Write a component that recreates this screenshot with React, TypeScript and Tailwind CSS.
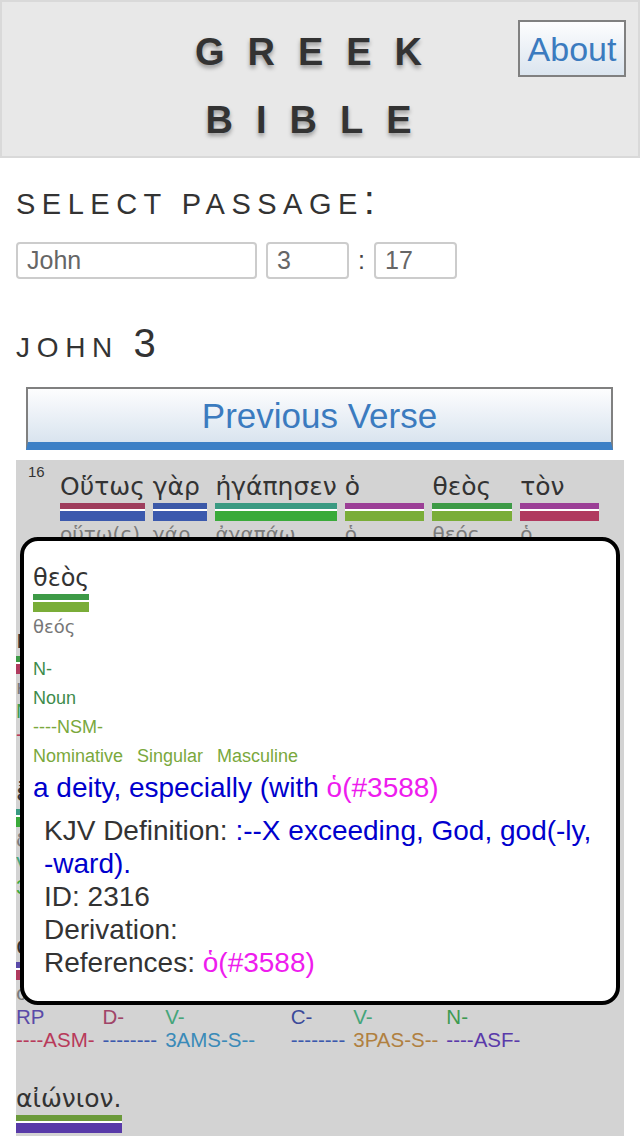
const greek = "font-['DejaVu_Sans',sans-serif]";

const pos: Record<string, { bar: string; text: string }> = {
  D: { bar: 'bg-[#9e3d5c]', text: 'text-[#a04468]' },
  C: { bar: 'bg-[#3b58a8]', text: 'text-[#3b4a9a]' },
  V: { bar: 'bg-[#3a9a82]', text: 'text-[#45a57a]' },
  RA: { bar: 'bg-[#9b3f96]', text: 'text-[#9b3f96]' },
  N: { bar: 'bg-[#3d9a46]', text: 'text-[#3d9a50]' },
  RP: { bar: 'bg-[#5a4aa8]', text: 'text-[#5a4aa8]' },
  A: { bar: 'bg-[#6b9a3b]', text: 'text-[#6b9a3b]' },
  P: { bar: 'bg-[#8a5a9a]', text: 'text-[#8a5a9a]' },
}

const morph: Record<string, { bar: string; text: string }> = {
  none: { bar: 'bg-[#3b59ad]', text: 'text-[#3b59ad]' },
  NSM: { bar: 'bg-[#7aad38]', text: 'text-[#7aad38]' },
  ASM: { bar: 'bg-[#b03a5f]', text: 'text-[#b83a5a]' },
  ASF: { bar: 'bg-[#583aa8]', text: 'text-[#5a3aaa]' },
  IND: { bar: 'bg-[#3aaa3a]', text: 'text-[#3aaa3a]' },
  SUBJ: { bar: 'bg-[#3a8ab8]', text: 'text-[#3a8ab8]' },
  PAS: { bar: 'bg-[#b08040]', text: 'text-[#b08040]' },
  PTC: { bar: 'bg-[#c07030]', text: 'text-[#c07030]' },
}

type W = { g: string; l: string; p: string; c: string; m: string; k: string }

// John 3:16, one array per displayed line
const rows: W[][] = [
  [
    { g: 'Οὕτως', l: 'οὕτω(ς)', p: 'D', c: 'D-', m: '--------', k: 'none' },
    { g: 'γὰρ', l: 'γάρ', p: 'C', c: 'C-', m: '--------', k: 'none' },
    { g: 'ἠγάπησεν', l: 'ἀγαπάω', p: 'V', c: 'V-', m: '3AAI-S--', k: 'IND' },
    { g: 'ὁ', l: 'ὁ', p: 'RA', c: 'RA', m: '----NSM-', k: 'NSM' },
    { g: 'θεὸς', l: 'θεός', p: 'N', c: 'N-', m: '----NSM-', k: 'NSM' },
    { g: 'τὸν', l: 'ὁ', p: 'RA', c: 'RA', m: '----ASM-', k: 'ASM' },
  ],
  [
    { g: 'κόσμον,', l: 'κόσμος', p: 'N', c: 'N-', m: '----ASM-', k: 'ASM' },
    { g: 'ὥστε', l: 'ὥστε', p: 'C', c: 'C-', m: '--------', k: 'none' },
    { g: 'τὸν', l: 'ὁ', p: 'RA', c: 'RA', m: '----ASM-', k: 'ASM' },
    { g: 'υἱὸν', l: 'υἱός', p: 'N', c: 'N-', m: '----ASM-', k: 'ASM' },
    { g: 'τὸν', l: 'ὁ', p: 'RA', c: 'RA', m: '----ASM-', k: 'ASM' },
  ],
  [
    { g: 'ἔδωκεν,', l: 'δίδωμι', p: 'V', c: 'V-', m: '3AAI-S--', k: 'IND' },
    { g: 'ἵνα', l: 'ἵνα', p: 'C', c: 'C-', m: '--------', k: 'none' },
    { g: 'πᾶς', l: 'πᾶς', p: 'A', c: 'A-', m: '----NSM-', k: 'NSM' },
    { g: 'ὁ', l: 'ὁ', p: 'RA', c: 'RA', m: '----NSM-', k: 'NSM' },
    { g: 'πιστεύων', l: 'πιστεύω', p: 'V', c: 'V-', m: '-PAPNSM-', k: 'PTC' },
  ],
  [
    { g: 'αὐτὸν', l: 'αὐτός', p: 'RP', c: 'RP', m: '----ASM-', k: 'ASM' },
    { g: 'μὴ', l: 'μή', p: 'D', c: 'D-', m: '--------', k: 'none' },
    { g: 'ἀπόληται', l: 'ἀπόλλυμι', p: 'V', c: 'V-', m: '3AMS-S--', k: 'SUBJ' },
    { g: 'ἀλλʼ', l: 'ἀλλά', p: 'C', c: 'C-', m: '--------', k: 'none' },
    { g: 'ἔχῃ', l: 'ἔχω', p: 'V', c: 'V-', m: '3PAS-S--', k: 'PAS' },
    { g: 'ζωὴν', l: 'ζωή', p: 'N', c: 'N-', m: '----ASF-', k: 'ASF' },
  ],
  [{ g: 'αἰώνιον.', l: 'αἰώνιος', p: 'A', c: 'A-', m: '----ASF-', k: 'ASF' }],
]

function Bars({ top, bottom }: { top: string; bottom: string }) {
  return (
    <div className="flex flex-col bg-white">
      <div className={`h-[6px] ${top}`} />
      <div className={`mt-[2px] h-[10px] ${bottom}`} />
    </div>
  )
}

function Word({ w }: { w: W }) {
  return (
    <div className="mr-[8px] flex shrink-0 flex-col">
      <div className={`${greek} whitespace-nowrap text-[25px] leading-[32px] text-[#333]`}>{w.g}</div>
      <Bars top={pos[w.p].bar} bottom={morph[w.k].bar} />
      <div className={`${greek} mt-[1px] whitespace-nowrap text-[20px] leading-[24px] text-[#7a7a7a]`}>{w.l}</div>
      <div className={`text-[20.5px] leading-[23px] ${pos[w.p].text}`}>{w.c}</div>
      <div className={`whitespace-nowrap text-[20.5px] leading-[23px] ${morph[w.k].text}`}>{w.m}</div>
    </div>
  )
}

function Popup() {
  return (
    <div className="absolute left-[4px] right-[4px] top-[77px] rounded-[18px] border-4 border-black bg-white pb-[22px] pl-[9px] pr-[10px] pt-[21px]">
      <div className="inline-flex flex-col">
        <div className={`${greek} text-[24px] leading-[32px] text-[#333]`}>θεὸς</div>
        <Bars top="bg-[#3d9a46]" bottom="bg-[#7aad38]" />
        <div className={`${greek} mt-[4px] text-[18px] leading-[22px] text-[#777]`}>θεός</div>
      </div>
      <div className="mt-[17px] text-[18px] leading-[29px]">
        <div className="text-[#3d8b4b]">N-</div>
        <div className="text-[#3d8b4b]">Noun</div>
        <div className="text-[#7aa83c]">----NSM-</div>
        <div className="text-[#7aa83c] [word-spacing:9px]">Nominative Singular Masculine</div>
      </div>
      <div className="text-[28px] leading-[33px] text-[#0000cd]">
        a deity, especially (with <span className="text-[#ee1cee]">ὁ(#3588)</span>
      </div>
      <div className="mt-[10px] pl-[11px] text-[28px] leading-[33px] text-[#333]">
        <div>
          KJV Definition:{' '}
          <span className="text-[#0000cd]">
            :--X exceeding, God, god(-ly, <span className="whitespace-nowrap">-ward).</span>
          </span>
        </div>
        <div>ID: 2316</div>
        <div>Derivation:</div>
        <div>
          References: <span className="text-[#ee1cee]">ὁ(#3588)</span>
        </div>
      </div>
    </div>
  )
}

export default function App() {
  return (
    <div className="min-h-[1136px] w-[640px] bg-white font-['Liberation_Sans',Arial,sans-serif] text-[#333]">
      {/* Header */}
      <header className="relative h-[158px] border-2 border-[#d9d9d9] bg-[#e8e8e8] pt-[16px]">
        <h1 className="text-center text-[38px] font-bold leading-[68px] tracking-[23px] text-[#333] [text-shadow:0_3px_4px_rgba(0,0,0,0.35)]">
          <div>GREEK</div>
          <div>BIBLE</div>
        </h1>
        <button className="absolute right-[12px] top-[18px] flex h-[57px] w-[108px] items-center justify-center border-2 border-[#808080] bg-linear-to-b from-[#fdfdfe] to-[#dbe5ef] text-[34px] leading-none text-[#3b7bbf]">
          About
        </button>
      </header>

      <main className="px-[16px]">
        <h2 className="mt-[22px] flex items-baseline tracking-[6.5px] text-[#333]">
          <span className="text-[29px] leading-[40px]">SELECT PASSAGE</span>
          <span className="text-[40px] leading-[40px]">:</span>
        </h2>

        <div className="mt-[18px] flex items-center">
          <input
            readOnly
            value="John"
            className="h-[37px] w-[241px] rounded-[4px] border-2 border-[#cccccc] px-[9px] text-[25px] text-[#666] outline-none"
          />
          <input
            readOnly
            value="3"
            className="ml-[9px] h-[37px] w-[83px] rounded-[4px] border-2 border-[#cccccc] px-[9px] text-[25px] text-[#666] outline-none"
          />
          <span className="w-[25px] text-center text-[25px] text-[#444]">:</span>
          <input
            readOnly
            value="17"
            className="h-[37px] w-[83px] rounded-[4px] border-2 border-[#cccccc] px-[9px] text-[25px] text-[#666] outline-none"
          />
        </div>

        <h2 className="mt-[43px] flex items-baseline leading-[40px] text-[#333]">
          <span className="text-[28px] tracking-[6.7px]">JOHN&nbsp;</span>
          <span className="text-[40px]">3</span>
        </h2>

        <button className="mx-[10px] mt-[19px] flex h-[63px] w-[587px] items-center justify-center border-x-2 border-t-2 border-b-[8px] border-[#808080] border-b-[#3d80c6] bg-linear-to-b from-[#fdfdfe] to-[#d9e4ef] text-[35px] leading-none text-[#3b7bbf]">
          Previous Verse
        </button>

        {/* Verse panel */}
        <div className="relative mt-[10px] overflow-hidden bg-[#d3d3d3] pb-[40px] pt-[11px]">
          {rows.map((row, i) => (
            <div key={i} className="mb-[32px] flex">
              {i === 0 && (
                <div className="-mt-[8px] w-[44px] shrink-0 pl-[12px] text-[15px] leading-[18px] text-[#333]">16</div>
              )}
              {row.map((w, j) => (
                <Word key={j} w={w} />
              ))}
            </div>
          ))}
          <Popup />
        </div>
      </main>
    </div>
  )
}
